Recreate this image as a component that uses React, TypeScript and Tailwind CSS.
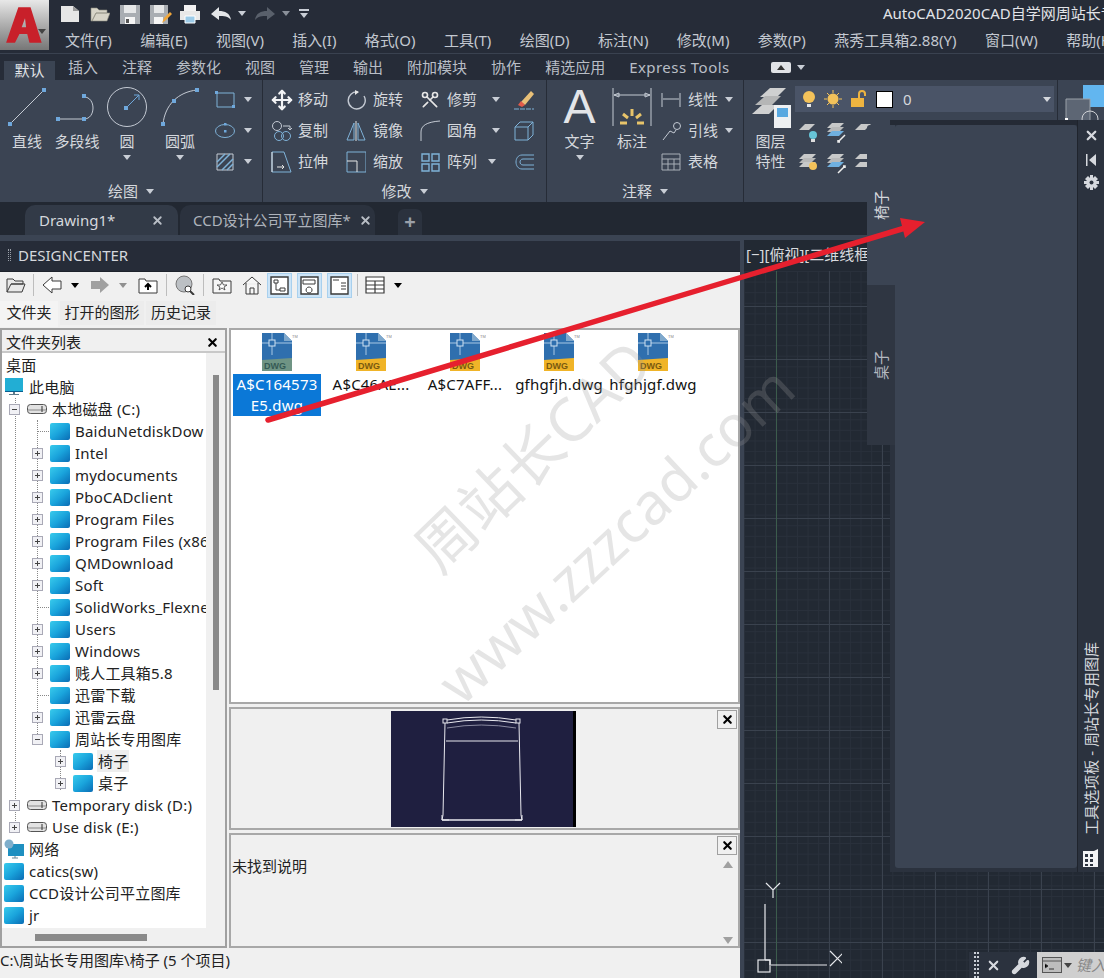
import type { ReactNode } from "react";
import { Move, Scissors, Wrench, X } from "lucide-react";

const menus = ["文件(F)", "编辑(E)", "视图(V)", "插入(I)", "格式(O)", "工具(T)", "绘图(D)", "标注(N)", "修改(M)", "参数(P)", "燕秀工具箱2.88(Y)", "窗口(W)", "帮助(H)"];
const ribbonTabs = ["插入", "注释", "参数化", "视图", "管理", "输出", "附加模块", "协作", "精选应用"];

type TreeRow = { level: number; label: string; kind: "folder" | "disk" | "pc" | "net" | "none"; box?: "+" | "-"; active?: boolean };

const tree: TreeRow[] = [
  { level: 0, label: "桌面", kind: "none" },
  { level: 0, label: "此电脑", kind: "pc" },
  { level: 1, label: "本地磁盘 (C:)", kind: "disk", box: "-" },
  { level: 2, label: "BaiduNetdiskDow", kind: "folder" },
  { level: 2, label: "Intel", kind: "folder", box: "+" },
  { level: 2, label: "mydocuments", kind: "folder", box: "+" },
  { level: 2, label: "PboCADclient", kind: "folder", box: "+" },
  { level: 2, label: "Program Files", kind: "folder", box: "+" },
  { level: 2, label: "Program Files (x86)", kind: "folder", box: "+" },
  { level: 2, label: "QMDownload", kind: "folder", box: "+" },
  { level: 2, label: "Soft", kind: "folder", box: "+" },
  { level: 2, label: "SolidWorks_Flexnet", kind: "folder" },
  { level: 2, label: "Users", kind: "folder", box: "+" },
  { level: 2, label: "Windows", kind: "folder", box: "+" },
  { level: 2, label: "贱人工具箱5.8", kind: "folder", box: "+" },
  { level: 2, label: "迅雷下载", kind: "folder" },
  { level: 2, label: "迅雷云盘", kind: "folder", box: "+" },
  { level: 2, label: "周站长专用图库", kind: "folder", box: "-" },
  { level: 3, label: "椅子", kind: "folder", box: "+", active: true },
  { level: 3, label: "桌子", kind: "folder", box: "+" },
  { level: 1, label: "Temporary disk (D:)", kind: "disk", box: "+" },
  { level: 1, label: "Use disk (E:)", kind: "disk", box: "+" },
  { level: 0, label: "网络", kind: "net" },
  { level: 0, label: "catics(sw)", kind: "folder" },
  { level: 0, label: "CCD设计公司平立图库", kind: "folder" },
  { level: 0, label: "jr", kind: "folder" },
];

const files = [
  { top: "A$C164573", bottom: "E5.dwg", selected: true },
  { top: "A$C46AE..." },
  { top: "A$C7AFF..." },
  { top: "gfhgfjh.dwg" },
  { top: "hfghjgf.dwg" },
];

function Caret({ className = "text-[#c9ced6]" }: { className?: string }) {
  return (
    <svg width="8" height="5" viewBox="0 0 8 5" className={className}>
      <path d="M0 0h8L4 5z" fill="currentColor" />
    </svg>
  );
}

function Svg({ w = 22, h = 22, children }: { w?: number; h?: number; children: ReactNode }) {
  return (
    <svg width={w} height={h} viewBox={`0 0 ${w} ${h}`} fill="none" className="shrink-0">
      {children}
    </svg>
  );
}

const node = "#6fa8dc";
const line = "#c4cad3";
const blue = "#7fb2d8";

function BigTool({ width, icon, label, label2, caret }: { width: number; icon: ReactNode; label: string; label2?: string; caret?: boolean }) {
  return (
    <div className="flex flex-col items-center pt-[6px]" style={{ width }}>
      <div className="flex h-[42px] items-center justify-center">{icon}</div>
      <div className="mt-[3px] h-[20px] leading-[20px] text-[15px] text-[#d5d8dd]">{label}</div>
      {label2 && <div className="h-[20px] leading-[20px] text-[15px] text-[#d5d8dd]">{label2}</div>}
      {caret && <div className="mt-[4px]"><Caret /></div>}
    </div>
  );
}

function SmallTool({ icon, label, iconW, gap, width, caretAt }: { icon: ReactNode; label?: string; iconW: number; gap: number; width: number; caretAt?: number }) {
  return (
    <div className="flex h-[31px] items-center" style={{ width }}>
      <div className="flex items-center justify-center" style={{ width: iconW }}>{icon}</div>
      {label && <span className="text-[15px] text-[#d5d8dd]" style={{ marginLeft: gap }}>{label}</span>}
      {caretAt !== undefined && <span style={{ marginLeft: caretAt }}><Caret /></span>}
    </div>
  );
}

function PanelLabel({ label }: { label: string }) {
  return (
    <div className="absolute inset-x-0 bottom-0 flex h-[22px] items-center justify-center gap-[8px] text-[15px] text-[#d5d8dd]">
      {label}
      <Caret />
    </div>
  );
}

function QuickBar() {
  return (
    <div className="flex h-[27px] items-center">
      <div className="flex w-[834px] shrink-0 items-center pl-[11px]">
        <Svg w={20} h={20}><path d="M1 2h12l6 5v11H1z" fill="#e6e6e6" /><path d="M13 2v5h6" fill="#9a9a9a" /></Svg>
        <span className="w-[10px]" />
        <Svg w={20} h={20}><path d="M1 17V4h6l2 2h8v3H6l-4 8 4-8h14l-3 8z" fill="#d8d5c8" stroke="#8c8a7c" strokeWidth=".6" /></Svg>
        <span className="w-[10px]" />
        <Svg w={20} h={20}><path d="M0 1h20v19H0z" fill="#a9adb2" /><path d="M4 1h12v8H4z" fill="#e6e7e8" /><path d="M5 13h10v7H5z" fill="#f5f5f5" /><path d="M6 15h3v4H6z" fill="#555" /></Svg>
        <span className="w-[10px]" />
        <Svg w={22} h={20}><path d="M0 1h18v19H0z" fill="#a9adb2" /><path d="M4 1h10v8H4z" fill="#e6e7e8" /><path d="M4 13h9v7H4z" fill="#f5f5f5" /><path d="M12 19l2-5 6-6 2 2-6 6z" fill="#f0a63a" /></Svg>
        <span className="w-[8px]" />
        <Svg w={20} h={20}><path d="M4 1h12v6H4z" fill="#f2f2f2" /><path d="M0 7h20v9H0z" fill="#e8e8e8" /><path d="M5 12h10v7H5z" fill="#9ccbe8" stroke="#fff" /></Svg>
        <span className="w-[10px]" />
        <Svg w={22} h={16}><path d="M1 8l8-7v4c6 0 11 2 12 9-3-4-7-4-12-4v4z" fill="#e3e5e8" /></Svg>
        <span className="ml-[6px]"><Caret /></span>
        <span className="w-[8px]" />
        <Svg w={22} h={16}><path d="M21 8l-8-7v4C7 5 2 7 1 14c3-4 7-4 12-4v4z" fill="#59606b" /></Svg>
        <span className="ml-[6px]"><Caret className="text-[#8a909a]" /></span>
        <span className="ml-[9px] flex flex-col items-center gap-[2px]">
          <span className="h-[2px] w-[10px] bg-[#c9ced6]" />
          <Caret />
        </span>
      </div>
      <span className="shrink-0 whitespace-nowrap text-[15px] text-[#e2e4e8]">AutoCAD2020CAD自学网周站长专用</span>
    </div>
  );
}

function RibbonBody() {
  return (
    <div className="flex h-[122px] bg-[#3b4453]">
      <div className="relative flex w-[263px] shrink-0 border-r border-[#262c37]">
        <BigTool width={54} label="直线" icon={<Svg w={40} h={40}><path d="M3 37L37 3" stroke={line} /><rect x="1" y="35" width="4" height="4" fill={node} /><rect x="35" y="1" width="4" height="4" fill={node} /></Svg>} />
        <BigTool width={46} label="多段线" icon={<Svg w={44} h={30}><path d="M3 27h26c12 0 12-22 0-22" stroke={line} /><rect x="1" y="25" width="4" height="4" fill={node} /><rect x="27" y="25" width="4" height="4" fill={node} /><rect x="27" y="2" width="4" height="4" fill={node} /></Svg>} />
        <BigTool width={54} label="圆" caret icon={<Svg w={42} h={42}><circle cx="21" cy="21" r="19.5" stroke={line} /><path d="M20 22l13-13m-5 0h5v5" stroke={node} /><rect x="18" y="20" width="4" height="4" fill={node} /></Svg>} />
        <BigTool width={52} label="圆弧" caret icon={<Svg w={40} h={40}><path d="M3 37C5 18 18 5 37 3" stroke={line} /><rect x="1" y="35" width="4" height="4" fill={node} /><rect x="35" y="1" width="4" height="4" fill={node} /><rect x="12" y="12" width="4" height="4" fill={node} /></Svg>} />
        <div className="flex flex-col pt-[4px]">
          <SmallTool width={56} iconW={38} gap={0} caretAt={0} icon={<Svg><path d="M3 4h17v14H3z" stroke={blue} /><rect x="1" y="2" width="3" height="3" fill={node} /><rect x="18" y="16" width="3" height="3" fill={node} /></Svg>} />
          <SmallTool width={56} iconW={38} gap={0} caretAt={0} icon={<Svg><ellipse cx="11" cy="11" rx="9.5" ry="6.5" stroke={blue} /><rect x="10" y="10" width="2.5" height="2.5" fill={node} /><rect x="10" y="3" width="2.5" height="2.5" fill={node} /></Svg>} />
          <SmallTool width={56} iconW={38} gap={0} caretAt={0} icon={<Svg><path d="M3 3h16v16H3z" stroke={line} /><path d="M3 11l8-8m-8 13L16 3m-8 16L19 8m-6 11l6-6" stroke={blue} strokeWidth="1.5" /></Svg>} />
        </div>
        <PanelLabel label="绘图" />
      </div>
      <div className="relative flex w-[284px] shrink-0 border-r border-[#262c37] pl-[8px]">
        <div className="flex w-[75px] flex-col pt-[4px]">
          <SmallTool width={75} iconW={22} gap={5} label="移动" icon={<Move size={22} color="#f2f3f5" strokeWidth={2.4} />} />
          <SmallTool width={75} iconW={22} gap={5} label="复制" icon={<Svg><circle cx="6" cy="6" r="4.5" stroke={line} /><circle cx="8" cy="16" r="4.5" stroke={blue} /><circle cx="15" cy="16" r="4.5" stroke={blue} /><path d="M12 6h7m0 0v4m-2-2l2 2 2-2" stroke={line} /></Svg>} />
          <SmallTool width={75} iconW={22} gap={5} label="拉伸" icon={<Svg><path d="M1 1h12l7 20H1z" stroke={blue} /><path d="M1 1v20M6 16h7m-2-2l2 2-2 2" stroke="#e6e6e6" /></Svg>} />
        </div>
        <div className="flex w-[74px] flex-col pt-[4px]">
          <SmallTool width={74} iconW={20} gap={7} label="旋转" icon={<Svg w={20} h={22}><path d="M12 3a8.500 8.500 0 1 0 6 4" stroke={line} strokeWidth="1.4" /><path d="M9 1l4 2-4 3z" fill="#e6e6e6" /></Svg>} />
          <SmallTool width={74} iconW={20} gap={7} label="镜像" icon={<Svg w={20} h={22}><path d="M8 3L1 20h7zM12 3l7 17h-7z" stroke={blue} /><path d="M10 1v20" stroke="#e6e6e6" /></Svg>} />
          <SmallTool width={74} iconW={20} gap={7} label="缩放" icon={<Svg w={20} h={22}><path d="M1 1h19v20H1z" stroke={blue} /><path d="M1 10h10v11" stroke="#e6e6e6" /></Svg>} />
        </div>
        <div className="flex w-[93px] flex-col pt-[4px]">
          <SmallTool width={93} iconW={20} gap={7} label="修剪" caretAt={15} icon={<Scissors size={20} color="#e6e6e6" className="rotate-90" />} />
          <SmallTool width={93} iconW={20} gap={7} label="圆角" caretAt={15} icon={<Svg w={20} h={22}><path d="M1 21V12C1 6 6 2 20 1" stroke={line} /></Svg>} />
          <SmallTool width={93} iconW={20} gap={7} label="阵列" caretAt={11} icon={<Svg w={20} h={22}><path d="M2 3h7v7H2zM12 3h7v7h-7zM2 13h7v7H2zM12 13h7v7h-7z" stroke={blue} strokeWidth="1.4" /></Svg>} />
        </div>
        <div className="flex w-[22px] flex-col pt-[4px]">
          <SmallTool width={22} iconW={22} gap={0} icon={<Svg><path d="M8 13L18 2l3 3-9 11z" fill="#e8c078" /><path d="M5 16l3-4 4 4-3 2z" fill="#e25a4a" /><path d="M1 20h20" stroke={blue} strokeDasharray="5 1" /></Svg>} />
          <SmallTool width={22} iconW={22} gap={0} icon={<Svg><path d="M2 7h13v13H2zM2 7l5-5h13v13l-5 5M15 7l5-5" stroke={blue} /></Svg>} />
          <SmallTool width={22} iconW={22} gap={0} icon={<Svg h={18}><path d="M21 2H9C1 2 1 16 9 16h12M21 6H10c-4 0-4 6 0 6h11" stroke={blue} /></Svg>} />
        </div>
        <PanelLabel label="修改" />
      </div>
      <div className="relative flex w-[197px] shrink-0 border-r border-[#262c37] pl-[5px]">
        <BigTool width={55} label="文字" caret icon={<span className="font-[family-name:'Liberation_Sans',sans-serif] text-[48px] leading-[42px] text-[#e3e5e8]">A</span>} />
        <BigTool width={50} label="标注" icon={<Svg w={40} h={40}><path d="M1 1v38M39 1v38" stroke={line} /><path d="M2 8h36M2 8l5-2v4zM38 8l-5-2v4z" stroke={line} /><path d="M20 22v7M11 27l5 4M29 27l-5 4M8 36h7M25 36h7" stroke="#e8c46a" strokeWidth="3" /></Svg>} />
        <div className="ml-[4px] flex flex-col pt-[4px]">
          <SmallTool width={80} iconW={20} gap={7} label="线性" caretAt={7} icon={<Svg w={20} h={22}><path d="M1 4v14M19 4v14M2 10h16" stroke={line} /></Svg>} />
          <SmallTool width={80} iconW={20} gap={7} label="引线" caretAt={7} icon={<Svg w={20} h={22}><path d="M2 20l7-9 4 2 2-3" stroke={line} /><circle cx="16" cy="6" r="3.500" stroke={line} /></Svg>} />
          <SmallTool width={80} iconW={20} gap={7} label="表格" icon={<Svg w={20} h={20}><path d="M1 2h18v16H1zM1 7h18M1 12h18M7 7v11M13 7v11" stroke="#a9afb8" /></Svg>} />
        </div>
        <PanelLabel label="注释" />
      </div>
      <div className="relative flex w-[314px] shrink-0 border-r border-[#262c37] pl-[2px]">
        <BigTool width={49} label="图层" label2="特性" icon={<Svg w={42} h={42}><path d="M10 11L20 2h16l-9 9z" fill="#cfd0d0" /><path d="M5 19l10-9h16l-9 9z" fill="#b5b6b6" /><path d="M2 28l10-9h16l-9 9z" fill="#cfd0d0" /><rect x="24" y="19" width="17" height="23" fill="#eef0f2" /><rect x="27" y="22" width="11" height="9" fill="#58a8e0" /></Svg>} />
        <div className="flex flex-col">
          <div className="mt-[6px] flex h-[26px] w-[259px] items-center bg-[#4a5467] pl-[6px]">
            <Svg w={16} h={20}><circle cx="8" cy="8" r="6" fill="#f3c25a" /><path d="M6 15h4v3H6z" fill="#e8e8e8" /></Svg>
            <span className="w-[7px]" />
            <Svg w={18} h={18}><circle cx="9" cy="9" r="5.500" fill="#f3c25a" /><path d="M9 0v3M9 15v3M0 9h3M15 9h3M3 3l2 2M13 13l2 2M15 3l-2 2M3 15l2-2" stroke="#f3c25a" /></Svg>
            <span className="w-[8px]" />
            <Svg w={18} h={18}><path d="M1 8h13v9H1z" fill="#eeb440" /><path d="M9 8V4c0-4 6-4 6 0v2" stroke="#eeb440" strokeWidth="2" /></Svg>
            <span className="ml-[8px] h-[17px] w-[17px] border border-black bg-white" />
            <span className="ml-[10px] text-[15px] text-[#d5d8dd]">0</span>
            <span className="ml-auto mr-[3px]"><Caret className="text-[#d5d8dd]" /></span>
          </div>
          <div className="mt-[6px] flex h-[28px] items-center gap-[8px] pl-[3px]">
            <Svg w={20} h={22}><path d="M1 9l6-6h10l-6 6z" fill="#c8c9c9" /><circle cx="15" cy="14" r="4" fill="#67c5d8" /><path d="M13 18h4v3h-4z" fill="#ddd" /></Svg>
            <Svg w={20} h={22}><path d="M1 7l5-5h12l-5 5z" fill="#c8c9c9" /><path d="M1 11l5-5h12l-5 5z" fill="#b8b9b9" /><path d="M1 15l5-5h12l-5 5z" fill="#6fb0e0" /><path d="M12 21l7-7m-5 7h-2v-2" stroke="#eee" strokeWidth="1.5" /></Svg>
            <Svg w={20} h={22}><path d="M1 9l6-6h10l-6 6z" fill="#c8c9c9" /></Svg>
          </div>
          <div className="mt-[3px] flex h-[28px] items-center gap-[8px] pl-[3px]">
            <Svg w={20} h={22}><path d="M1 7l5-5h12l-5 5z" fill="#c8c9c9" /><path d="M1 11l5-5h12l-5 5z" fill="#b8b9b9" /><path d="M1 15l5-5h12l-5 5z" fill="#c8c9c9" /><circle cx="15" cy="14" r="4" fill="#f3c25a" /></Svg>
            <Svg w={20} h={22}><path d="M1 7l5-5h12l-5 5z" fill="#c8c9c9" /><path d="M1 11l5-5h12l-5 5z" fill="#b8b9b9" /><path d="M1 15l5-5h12l-5 5z" fill="#6fb0e0" /><path d="M12 21l7-7m-2 0h2v2" stroke="#eee" strokeWidth="1.5" /></Svg>
            <Svg w={20} h={22}><path d="M1 7l5-5h12l-5 5z" fill="#c8c9c9" /><path d="M1 15l5-5h12l-5 5z" fill="#c8c9c9" /></Svg>
          </div>
        </div>
      </div>
      <div className="flex-1 pl-[7px] pt-[5px]">
        <Svg w={39} h={40}><path d="M18 0h21v22H18z" fill="#62b6f0" /><path d="M1 14h24v22H1z" fill="#5d6674" stroke="#9aa0a8" /><circle cx="25" cy="34" r="8" stroke="#d0d2d6" /><rect y="33" width="3" height="3" fill="#fff" /></Svg>
      </div>
    </div>
  );
}

function DocTabs() {
  return (
    <div className="flex h-[33px] items-end bg-[#222832] pl-[25px]">
      <div className="flex h-[30px] w-[153px] items-center rounded-t-[10px] bg-[#323a47] px-[14px] text-[#d5d8dd]">
        <span className="text-[15px]">Drawing1*</span>
        <X size={13} strokeWidth={3.4} className="ml-auto text-[#b9bec6]" />
      </div>
      <div className="ml-[2px] flex h-[30px] w-[195px] items-center rounded-t-[10px] bg-[#2b323e] pl-[13px] pr-[3px] text-[#aeb3bb]">
        <span className="whitespace-nowrap text-[15px]">CCD设计公司平立图库*</span>
        <X size={13} strokeWidth={3.4} className="ml-auto text-[#b9bec6]" />
      </div>
      <div className="ml-[23px] flex h-[26px] w-[24px] items-center justify-center rounded-t-[6px] bg-[#2b323e] text-[20px] font-bold leading-none text-[#9aa0a9]">+</div>
    </div>
  );
}

function TreeIcon({ kind }: { kind: TreeRow["kind"] }) {
  if (kind === "folder") return <span className="block h-[17px] w-[20px] rounded-[2px] bg-gradient-to-br from-[#38cbec] via-[#1aa4dc] to-[#0c6cb4]" />;
  if (kind === "disk") {
    return (
      <svg width="20" height="12" viewBox="0 0 20 12">
        <rect x=".5" y="1.500" width="19" height="9" rx="3" fill="#e2e2e2" stroke="#555" />
        <path d="M1 7h18" stroke="#888" />
        <path d="M15 3v6" stroke="#333" />
      </svg>
    );
  }
  if (kind === "pc") {
    return (
      <svg width="20" height="18" viewBox="0 0 20 18">
        <rect x="1" y="0" width="18" height="13" fill="#22aed4" />
        <path d="M1 13h18v1H1z" fill="#0a5f90" />
        <path d="M9 14h2v2H9zM5 16h10v1H5z" fill="#5d7a8a" />
      </svg>
    );
  }
  if (kind === "net") {
    return (
      <svg width="20" height="20" viewBox="0 0 20 20">
        <rect x="4" y="5" width="16" height="12" fill="#1e8fc0" />
        <path d="M11 17v2M8 19h6" stroke="#6a8796" />
        <circle cx="5" cy="5" r="4.500" fill="#7faecb" />
      </svg>
    );
  }
  return null;
}

function Expander({ sign }: { sign: "+" | "-" }) {
  return (
    <span className="relative block h-[11px] w-[11px] border border-[#a9a9b6] bg-[#f1f1f5]">
      <span className="absolute left-[2px] top-[4px] h-px w-[5px] bg-[#444]" />
      {sign === "+" && <span className="absolute left-[4px] top-[2px] h-[5px] w-px bg-[#444]" />}
    </span>
  );
}

function TreePane() {
  return (
    <div className="relative flex h-[620px] w-[227px] shrink-0 flex-col border-2 border-[#a0a0a0] bg-[#f0f0f0]">
      <div className="flex h-[23px] shrink-0 items-center justify-between border-b-2 border-[#c8c8c8] pl-[4px] pr-[6px] pt-[3px] text-[15px] text-[#222]">
        文件夹列表
        <X size={13} strokeWidth={4} className="text-black" />
      </div>
      <div className="flex min-h-0 flex-1">
        <div className="relative h-[575px] w-[204px] overflow-hidden bg-white pt-[1px]">
          <span className="absolute left-[13px] top-[45px] h-[433px] border-l border-dotted border-[#888]" />
          <span className="absolute left-[35px] top-[67px] h-[320px] border-l border-dotted border-[#888]" />
          <span className="absolute left-[58px] top-[397px] h-[40px] border-l border-dotted border-[#888]" />
          {tree.map((row) => (
            <div key={row.label} className="relative flex h-[22px] items-center whitespace-nowrap text-[15px] tracking-[0.2px] text-[#222]" style={{ paddingLeft: row.level > 0 ? 2 + (row.level - 1) * 23 : 2 }}>
              {row.level > 0 && (
                <span className="flex w-[23px] shrink-0 items-center">
                  <span className="ml-[5px]">{row.box ? <Expander sign={row.box} /> : <span className="ml-[6px] block w-[11px] border-t border-dotted border-[#888]" />}</span>
                </span>
              )}
              {row.kind === "none" ? null : <span className="mr-[4px] flex w-[20px] shrink-0 justify-center"><TreeIcon kind={row.kind} /></span>}
              <span className={row.active ? "bg-[#eeeeee] px-[1px]" : row.kind === "none" ? "pl-[2px]" : "px-[1px]"}>{row.label}</span>
            </div>
          ))}
        </div>
        <div className="relative w-[19px] bg-[#f0f0f0]">
          <span className="absolute left-[7px] top-[22px] h-[315px] w-[6px] bg-[#8a8a8a]" />
        </div>
      </div>
      <div className="absolute bottom-[5px] left-[33px] h-[7px] w-[112px] bg-[#8a8a8a]" />
    </div>
  );
}

function DwgIcon({ muted }: { muted?: boolean }) {
  return (
    <svg width="36" height="38" viewBox="0 0 36 38">
      <path d="M0 0h22l8 8v30H0z" fill="#2f6fae" />
      <path d="M10 0v22M0 10h30" stroke="#a8c8e4" />
      <rect x="7" y="7" width="6" height="6" fill="#2f6fae" stroke="#cfe2f2" />
      <path d="M0 27l30 -2v13H0z" fill={muted ? "#6f9484" : "#f0b428"} />
      <path d="M22 0v8h8" fill="#7fa8cc" />
      <text x="2" y="36" fontSize="9" fill={muted ? "#355a55" : "#7a5a10"} fontFamily="Liberation Sans" fontWeight="700">DWG</text>
      <text x="30" y="5" fontSize="4" fill="#888" fontFamily="Liberation Sans">TM</text>
    </svg>
  );
}

function ChairPreview() {
  return (
    <div className="ml-[160px] mt-[2px] h-[116px] w-[185px] border-r-[3px] border-black bg-[#1f1f40]">
      <svg width="182" height="116" viewBox="0 0 182 116" fill="none" stroke="#e8e8ee" strokeWidth="1">
        <rect x="52" y="8" width="4" height="4" />
        <rect x="125" y="8" width="4" height="4" />
        <path d="M56 9Q90 3 125 9M56 12Q90 6 125 12" />
        <path d="M56 17Q90 11 125 17" stroke="#8a8aa0" />
        <path d="M54 12L52 104 51 109M128 12L130 104 131 109M55 30H127" />
        <path d="M51 109H131" strokeWidth="1.4" />
        <path d="M51 104v5h7M131 104v5h-7" />
      </svg>
    </div>
  );
}

function CloseBox() {
  return (
    <span className="flex h-[19px] w-[20px] items-center justify-center border border-[#a0a0a0] bg-[#f0f0f0]">
      <X size={13} strokeWidth={4} className="text-black" />
    </span>
  );
}

function RightPanes() {
  return (
    <div className="flex w-[511px] flex-col gap-[3px]">
      <div className="h-[376px] border-2 border-[#a8a8a8] bg-white">
        <div className="-ml-[1px] flex">
          {files.map((f, i) => (
            <div key={f.top} className="flex w-[94px] shrink-0 flex-col items-center pt-[3px]">
              <span className="pl-[6px]"><DwgIcon muted={i === 0} /></span>
              <div className={`mt-[3px] w-[88px] text-center text-[15px] leading-[21px] tracking-[0.2px] whitespace-nowrap ${f.selected ? "bg-[#0b78d7] text-white" : "text-[#111]"}`}>
                <div>{f.top}</div>
                {f.bottom && <div>{f.bottom}</div>}
              </div>
            </div>
          ))}
        </div>
      </div>
      <div className="relative h-[123px] border-2 border-[#a8a8a8] bg-[#f0f0f0]">
        <ChairPreview />
        <span className="absolute right-[1px] top-[1px]"><CloseBox /></span>
      </div>
      <div className="relative h-[115px] border-2 border-[#a8a8a8] bg-[#f0f0f0] pl-[1px] pt-[20px] text-[15px] text-[#222]">
        未找到说明
        <span className="absolute right-[1px] top-[1px]"><CloseBox /></span>
        <span className="absolute right-[5px] top-[26px] h-0 w-0 border-x-[5px] border-b-[7px] border-x-transparent border-b-[#a0a0a0]" />
        <span className="absolute right-[5px] bottom-[2px] h-0 w-0 border-x-[5px] border-t-[7px] border-x-transparent border-t-[#a0a0a0]" />
      </div>
    </div>
  );
}

function DcToolbar() {
  const s = "#3a3a3a";
  return (
    <div className="flex h-[29px] items-center pb-[3px] pl-[6px]">
      <Svg w={20} h={18}><path d="M1 16V3h6l2 2h8v3H5l-4 8h15l3-8H5" fill="#e8e8e8" stroke={s} strokeWidth="1" /></Svg>
      <span className="ml-[7px] mr-[8px] h-[22px] border-l border-[#bdbdbd]" />
      <Svg w={20} h={18}><path d="M1 9l9-8v4h9v8h-9v4z" fill="#fff" stroke={s} /></Svg>
      <span className="ml-[9px]"><Caret className="text-black" /></span>
      <span className="w-[11px]" />
      <Svg w={20} h={18}><path d="M19 9l-9-8v4H1v8h9v4z" fill="#a0a0a0" /></Svg>
      <span className="ml-[9px]"><Caret className="text-[#909090]" /></span>
      <span className="w-[11px]" />
      <Svg w={20} h={18}><path d="M1 17V3h6l1 2h11v12z" fill="#fff" stroke={s} /><path d="M10 14V8m-3 3l3-3 3 3" stroke="#000" strokeWidth="2" /></Svg>
      <span className="mx-[8px] h-[22px] border-l border-[#bdbdbd]" />
      <Svg w={20} h={20}><circle cx="9" cy="9" r="8" fill="#bcc0c4" stroke="#777" /><circle cx="13" cy="14" r="3" fill="#fff" stroke={s} /><path d="M15 16l4 4" stroke={s} strokeWidth="2" /></Svg>
      <span className="mx-[8px] h-[22px] border-l border-[#bdbdbd]" />
      <Svg w={20} h={18}><path d="M1 17V3h6l1 2h11v12z" fill="#f6f6f6" stroke={s} /><path d="M10 6l1.500 3H15l-3 2 1 3-3-2-3 2 1-3-3-2h3.500z" fill="#fff" stroke={s} strokeWidth=".8" /></Svg>
      <span className="w-[10px]" />
      <Svg w={20} h={20}><path d="M1 10l9-8 9 8M4 8v11h12V8" stroke={s} fill="#f6f6f6" /><path d="M8 19v-6h4v6" stroke={s} /></Svg>
      <span className="w-[5px]" />
      {[0, 1, 2].map((i) => (
        <span key={i} className="mr-[5px] flex h-[25px] w-[25px] items-center justify-center border border-[#a8d0ee] bg-[#cce4f7]">
          <Svg w={19} h={19}>
            <path d="M1 1h17v17H1z" fill="#fff" stroke={s} strokeWidth="1.4" />
            {i === 0 && <path d="M4 4h4v3H4zM6 7v7h4M10 12h5v3h-5z" stroke={s} />}
            {i === 1 && <path d="M3 4h12v4H3zM9 11a3 3 0 1 0 .1 0" stroke={s} />}
            {i === 2 && <path d="M3 4h6M11 7h5M11 10h5M11 13h5" stroke={s} />}
          </Svg>
        </span>
      ))}
      <span className="mr-[7px] h-[22px] border-l border-[#bdbdbd]" />
      <Svg w={20} h={18}><path d="M1 1h18v16H1zM1 5h18M1 9h18M1 13h18M10 5v12" stroke={s} strokeWidth="1.2" fill="#fff" /></Svg>
      <span className="ml-[9px]"><Caret className="text-black" /></span>
    </div>
  );
}

function DesignCenter() {
  return (
    <div className="flex w-[740px] shrink-0 flex-col bg-[#f0f0f0]">
      <div className="flex h-[32px] items-center gap-[7px] border-t border-[#3b4453] border-b border-b-[#1d222b] bg-[#262c38] pb-[2px] pl-[8px]">
        <span className="h-[12px] w-[3px] border-x border-dotted border-[#9aa0a9]" />
        <span className="text-[15px] text-[#d5d8dd]">DESIGNCENTER</span>
      </div>
      <DcToolbar />
      <div className="flex h-[26px] items-start text-[15px] text-[#222]">
        <span className="flex h-[26px] w-[58px] items-center justify-center bg-[#f4f4f4] pb-[3px]">文件夹</span>
        <span className="ml-[2px] flex h-[24px] w-[84px] items-center justify-center bg-[#ececec] pb-[1px]">打开的图形</span>
        <span className="ml-[2px] flex h-[24px] w-[70px] items-center justify-center bg-[#ececec] pb-[1px]">历史记录</span>
      </div>
      <div className="mt-[1px] flex gap-[2px]">
        <TreePane />
        <RightPanes />
      </div>
      <div className="flex h-[29px] items-center pb-[5px] text-[15px] text-[#222]">C:\周站长专用图库\椅子 (5 个项目)</div>
    </div>
  );
}

function Canvas() {
  return (
    <div className="relative flex-1 border-l-[4px] border-[#3b4453] bg-[#222933]">
      <div className="h-[31px] bg-[#222933] pl-[2px] pt-[3px] text-[15px] whitespace-nowrap text-[#d8dade]">[−][俯视][二维线框]</div>
      <div className="h-[707px] bg-[#222933] bg-[linear-gradient(to_right,#3a424e_1px,transparent_1px),linear-gradient(to_bottom,#3a424e_1px,transparent_1px),linear-gradient(to_right,#29303b_1px,transparent_1px),linear-gradient(to_bottom,#29303b_1px,transparent_1px)] bg-[size:53px_53px,53px_53px,10.6px_10.6px,10.6px_10.6px] bg-[position:32px_35px,32px_35px,0_0,0_0]" />
      <span className="absolute bottom-0 left-[32px] top-[31px] w-px bg-[#3c5c4c]" />
      <div className="absolute left-[8px] top-[640px]">
        <svg width="90" height="98" viewBox="0 0 90 98" fill="none" stroke="#e6e8ec" strokeWidth="1.2">
          <path d="M13 24V80M19 85H75" />
          <rect x="6" y="80" width="12" height="12" />
          <path d="M13 80h5v5" />
          <path d="M14 3l7 7 7-7M21 10v8" />
          <path d="M78 71L93 86M93 71L78 86" />
        </svg>
      </div>
    </div>
  );
}

function ToolPalette() {
  return (
    <div className="absolute left-[867px] top-[120px] flex h-[752px] w-[237px] text-[#d5d8dd]">
      <div className="flex w-[210px] flex-col">
        <div className="ml-[23px] h-[5px] bg-[#242a35]" />
        <div className="flex flex-1">
          <div className="flex w-[28px] flex-col">
            <div className="flex h-[160px] items-center justify-center rounded-tl-[3px] bg-[#3b4453]">
              <span className="rotate-180 text-[15px] [text-orientation:sideways] [writing-mode:vertical-rl]">椅子</span>
            </div>
            <div className="flex h-[160px] items-center justify-center bg-[#2f3642] text-[#b4b9c1]">
              <span className="rotate-180 text-[15px] [text-orientation:sideways] [writing-mode:vertical-rl]">桌子</span>
            </div>
            <div className="ml-[23px] flex-1 bg-[#2b323e]" />
          </div>
          <div className="flex-1 bg-[#2b323e] pb-[4px]">
            <div className="h-full rounded-[3px] bg-[#3b4453]" />
          </div>
        </div>
      </div>
      <div className="flex flex-1 flex-col items-center border-l border-[#1f242d] bg-[#2b323e] pt-[8px]">
        <X size={15} strokeWidth={3.6} className="text-[#d6d9de]" />
        <svg width="12" height="14" viewBox="0 0 12 14" className="mt-[10px]"><path d="M1 1v12h1.500V1zM11 1v12L4 7z" fill="#d6d9de" /></svg>
        <svg width="15" height="15" viewBox="0 0 15 15" className="mt-[8px]"><path d="M6 0h3v3l2-2 3 3-2 2h3v3h-3l2 2-3 3-2-2v3H6v-3l-2 2-3-3 2-2H0V6h3L1 4l3-3 2 2z" fill="#d6d9de" /><circle cx="7.500" cy="7.500" r="2" fill="#2b323e" /></svg>
        <span className="mt-auto rotate-180 whitespace-nowrap text-[15px] [text-orientation:sideways] [writing-mode:vertical-rl]">工具选项板 - 周站长专用图库</span>
        <svg width="16" height="20" viewBox="0 0 16 20" className="mb-[3px] mt-[14px]"><path d="M0 2h11l4-2v18H0z" fill="#f2f3f5" /><path d="M2 5h3v3H2zM7 5h3v3H7zM2 10h3v3H2zM7 10h3v3H7zM2 15h3v2H2zM7 15h3v2H7z" fill="#2b323e" /></svg>
      </div>
    </div>
  );
}

function CommandLine() {
  return (
    <div className="absolute bottom-0 right-0 flex h-[26px] w-[135px] items-center">
      <div className="flex h-full w-[68px] items-center bg-[#2b323e] pl-[5px]">
        <span className="h-full w-[5px] border-x-2 border-dotted border-[#c9ced6]" />
        <X size={15} strokeWidth={3.4} className="ml-[7px] text-[#d6d9de]" />
        <Wrench size={19} className="ml-[10px] text-[#d6d9de]" fill="#d6d9de" />
      </div>
      <div className="flex h-full flex-1 items-center overflow-hidden bg-[#cfcfcf] pl-[5px]">
        <svg width="20" height="16" viewBox="0 0 20 16" className="shrink-0"><rect x=".5" y=".5" width="19" height="15" fill="#bdbdbd" stroke="#555" /><path d="M1 4h18" stroke="#555" /><path d="M3 7l3 2-3 2M7 12h5" stroke="#333" /></svg>
        <span className="ml-[2px] shrink-0"><Caret className="text-[#444]" /></span>
        <span className="ml-[4px] text-[15px] whitespace-nowrap text-[#888] italic">键入</span>
      </div>
    </div>
  );
}

function Watermark() {
  return (
    <div className="pointer-events-none absolute inset-0 overflow-hidden text-[#9a9a9a] opacity-25">
      <span className="absolute left-[382px] top-[425px] origin-center -rotate-[44deg] whitespace-nowrap text-[60px] leading-none">周站长CAD</span>
      <span className="absolute left-[385px] top-[505px] origin-center -rotate-[43deg] whitespace-nowrap text-[58px] leading-none">www.zzzcad.com</span>
    </div>
  );
}

function RedArrow() {
  return (
    <svg width="1104" height="978" viewBox="0 0 1104 978" className="pointer-events-none absolute left-0 top-0">
      <path d="M268 420L905 228" stroke="#e6202e" strokeWidth="5.5" strokeLinecap="round" />
      <path d="M925 222L900 218 905 238z" fill="#e6202e" />
    </svg>
  );
}

export default function App() {
  return (
    <div className="relative h-[978px] w-[1104px] overflow-hidden bg-[#222833] font-[family-name:'Noto_Sans','Noto_Sans_CJK_SC',sans-serif]">
      <div className="flex h-[54px] border-b border-[#3a4250] bg-[#262c38]">
        <div className="relative flex h-[50px] w-[49px] shrink-0 items-center justify-center bg-gradient-to-b from-[#e8e8e8] to-[#777]">
          <svg width="40" height="42" viewBox="0 0 36 36"><path d="M12 2h11l10 32H22l-2-8h-7l-4 8H1zM15 20h4l-1-8z" fill="#c8202a" fillRule="evenodd" /></svg>
          <span className="absolute bottom-[16px] right-[3px]"><Caret className="text-[#444]" /></span>
        </div>
        <div className="min-w-0 flex-1 overflow-hidden">
          <QuickBar />
          <div className="flex h-[26px] items-center gap-[28.4px] whitespace-nowrap pl-[16px] text-[15px] text-[#c3c8d0]">
            {menus.map((m) => <span key={m}>{m}</span>)}
          </div>
        </div>
      </div>
      <div className="flex h-[26px] items-end bg-[#262c38] pl-[4px] text-[15px] text-[#b9bec6]">
        <span className="flex h-[19px] w-[51px] items-center justify-center bg-[#3b4453] text-[#e2e4e8]">默认</span>
        <div className="flex h-[26px] items-center gap-[24px] pl-[13px] whitespace-nowrap">
          {ribbonTabs.map((t) => <span key={t}>{t}</span>)}
          <span className="tracking-[0.45px]">Express Tools</span>
          <span className="ml-[17px] flex items-center gap-[6px]">
            <span className="flex h-[11px] w-[20px] items-center justify-center rounded-[2px] bg-[#e0e2e6]"><span className="h-0 w-0 border-x-[4px] border-b-[5px] border-x-transparent border-b-[#333]" /></span>
            <Caret />
          </span>
        </div>
      </div>
      <RibbonBody />
      <DocTabs />
      <div className="h-[5px] bg-[#3b4453]" />
      <div className="flex h-[738px]">
        <DesignCenter />
        <Canvas />
      </div>
      <Watermark />
      <ToolPalette />
      <CommandLine />
      <RedArrow />
    </div>
  );
}
